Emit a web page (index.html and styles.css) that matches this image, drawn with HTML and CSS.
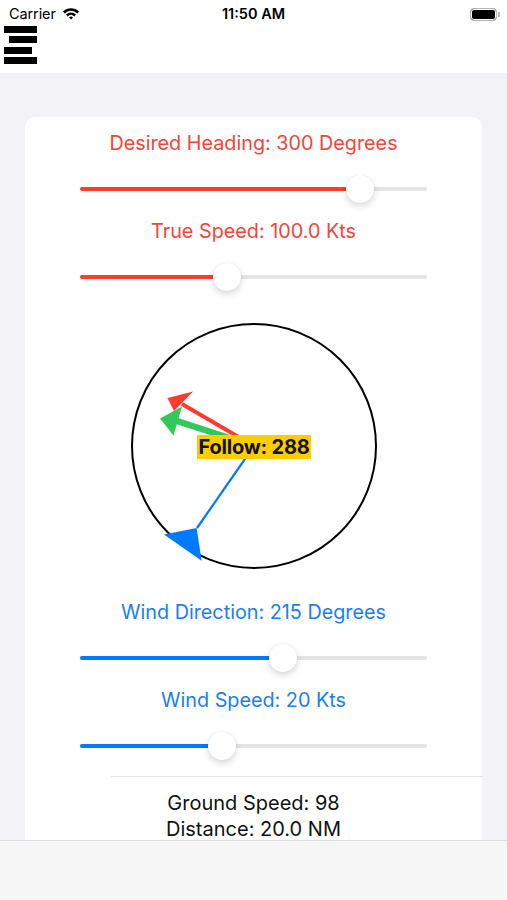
FILE: index.html
```html
<!DOCTYPE html>
<html>
<head>
<meta charset="utf-8">
<link rel="stylesheet" href="styles.css">
</head>
<body>
<header class="header">
  <div class="status">
    <div class="status-left">
      <span class="carrier">Carrier</span>
      <svg class="wifi" width="18" height="13" viewBox="0 0 18 13">
        <path d="M1 4.6 A11.5 11.5 0 0 1 17 4.6 L15.3 6.4 A9 9 0 0 0 2.7 6.4 Z" fill="#000"/>
        <path d="M4 7.6 A7.2 7.2 0 0 1 14 7.6 L12.3 9.4 A4.8 4.8 0 0 0 5.7 9.4 Z" fill="#000"/>
        <path d="M7 10.5 A2.9 2.9 0 0 1 11 10.5 L9 12.6 Z" fill="#000"/>
      </svg>
    </div>
    <div class="time">11:50 AM</div>
    <div class="battery"><div class="battery-level"></div><div class="battery-nub"></div></div>
  </div>
  <div class="menu">
    <div class="bar bar-full"></div>
    <div class="bar bar-right"></div>
    <div class="bar bar-left"></div>
    <div class="bar bar-full"></div>
  </div>
</header>
<main class="main">
  <section class="card">
    <div class="label red">Desired Heading: 300 Degrees</div>
    <div class="slider red-slider">
      <div class="track"></div>
      <div class="fill" style="width:280px"></div>
      <div class="thumb" style="left:266px"></div>
    </div>
    <div class="label red">True Speed: 100.0 Kts</div>
    <div class="slider red-slider">
      <div class="track"></div>
      <div class="fill" style="width:147px"></div>
      <div class="thumb" style="left:133px"></div>
    </div>
    <div class="compass">
      <svg class="compass-svg" width="457" height="250" viewBox="0 0 457 250">
        <circle cx="229" cy="125" r="122" fill="none" stroke="#000" stroke-width="2"/>
        <line x1="229" y1="125" x2="157" y2="83" stroke="#ff3b30" stroke-width="4"/>
        <polygon points="142.5,77 168,70.5 149,90" fill="#ff3b30"/>
        <line x1="229" y1="125" x2="152" y2="100" stroke="#34c759" stroke-width="6.5"/>
        <polygon points="135,97.5 157,85.5 148.5,114.5" fill="#34c759"/>
        <line x1="229" y1="125" x2="172" y2="207" stroke="#007aff" stroke-width="2.2"/>
        <polygon points="171.6,206.9 176.6,239.8 139,213.4" fill="#007aff"/>
      </svg>
      <div class="follow">Follow: 288</div>
    </div>
    <div class="label blue">Wind Direction: 215 Degrees</div>
    <div class="slider blue-slider">
      <div class="track"></div>
      <div class="fill" style="width:203px"></div>
      <div class="thumb" style="left:189px"></div>
    </div>
    <div class="label blue">Wind Speed: 20 Kts</div>
    <div class="slider blue-slider">
      <div class="track"></div>
      <div class="fill" style="width:142px"></div>
      <div class="thumb" style="left:128px"></div>
    </div>
    <div class="separator"></div>
    <div class="results">
      <div>Ground Speed: 98</div>
      <div>Distance: 20.0 NM</div>
    </div>
  </section>
</main>
<nav class="tabbar"></nav>
</body>
</html>
```

FILE: styles.css
```css
* { box-sizing: border-box; }
html, body { margin: 0; padding: 0; }
body {
  width: 507px;
  height: 900px;
  overflow: hidden;
  background: #f2f2f7;
  font-family: Inter, "Liberation Sans", Arial, sans-serif;
  color: #000;
}
.header {
  background: #fff;
  height: 73px;
}
.status {
  height: 25px;
  display: flex;
  align-items: center;
  justify-content: space-between;
  padding: 2px 7px 0 9px;
  position: relative;
}
.status-left {
  display: flex;
  align-items: center;
  gap: 6px;
}
.carrier {
  font-size: 14.5px;
  letter-spacing: -0.1px;
}
.wifi { display: block; margin-top: -1px; }
.time {
  position: absolute;
  left: 0;
  right: 0;
  top: 5px;
  text-align: center;
  font-size: 14.5px;
  font-weight: 600;
}
.battery {
  display: flex;
  align-items: center;
  gap: 1px;
  margin-top: 1px;
}
.battery-level {
  width: 27px;
  height: 13px;
  border: 1.5px solid #b5b5b5;
  border-radius: 4px;
  background: #000;
  box-shadow: inset 0 0 0 1px #fff;
}
.battery-nub {
  width: 2px;
  height: 5px;
  background: #b5b5b5;
  border-radius: 0 1px 1px 0;
}
.menu {
  margin-left: 4px;
  width: 33px;
  display: flex;
  flex-direction: column;
  gap: 3.5px;
  padding-top: 0.5px;
}
.bar {
  height: 7px;
  background: #000;
}
.bar-full { width: 33px; }
.bar-right { width: 28px; margin-left: 5px; }
.bar-left { width: 28px; }

.main {
  padding: 44px 25px 0;
}
.card {
  background: #fff;
  border-radius: 10px;
  padding: 14px 0 50px;
}
.label {
  font-size: 19.8px;
  line-height: 24px;
  text-align: center;
}
.red { color: #f2453a; }
.blue { color: #1a7ef3; }
.slider {
  position: relative;
  height: 28px;
  margin: 20px 55px 16px;
}
.track {
  position: absolute;
  left: 0;
  right: 0;
  top: 12px;
  height: 4px;
  border-radius: 2px;
  background: #e4e4e6;
}
.fill {
  position: absolute;
  left: 0;
  top: 12px;
  height: 4px;
  border-radius: 2px;
}
.red-slider .fill { background: #ff3b30; }
.blue-slider .fill { background: #007aff; }
.thumb {
  position: absolute;
  top: 0;
  width: 28px;
  height: 28px;
  border-radius: 50%;
  background: #fff;
  box-shadow: 0 3px 7px rgba(0,0,0,0.16), 0 0 1px rgba(0,0,0,0.12);
}
.compass {
  position: relative;
  height: 250px;
  margin-top: 30px;
  margin-bottom: 29px;
}
.compass-svg { display: block; }
.follow {
  position: absolute;
  left: 172px;
  top: 114px;
  width: 114px;
  height: 24px;
  background: #ffcc00;
  font-size: 20px;
  font-weight: 700;
  line-height: 24px;
  text-align: center;
  color: #111;
  letter-spacing: -0.2px;
}
.separator {
  height: 1px;
  background: #e3e3e6;
  margin: 1px 0 0 86px;
}
.results {
  padding-top: 13px;
  font-size: 20px;
  line-height: 26px;
  text-align: center;
  color: #111;
}
.tabbar {
  position: fixed;
  left: 0;
  right: 0;
  bottom: 0;
  height: 60px;
  background: #f7f7f7;
  border-top: 1px solid #dcdcdc;
}
```
